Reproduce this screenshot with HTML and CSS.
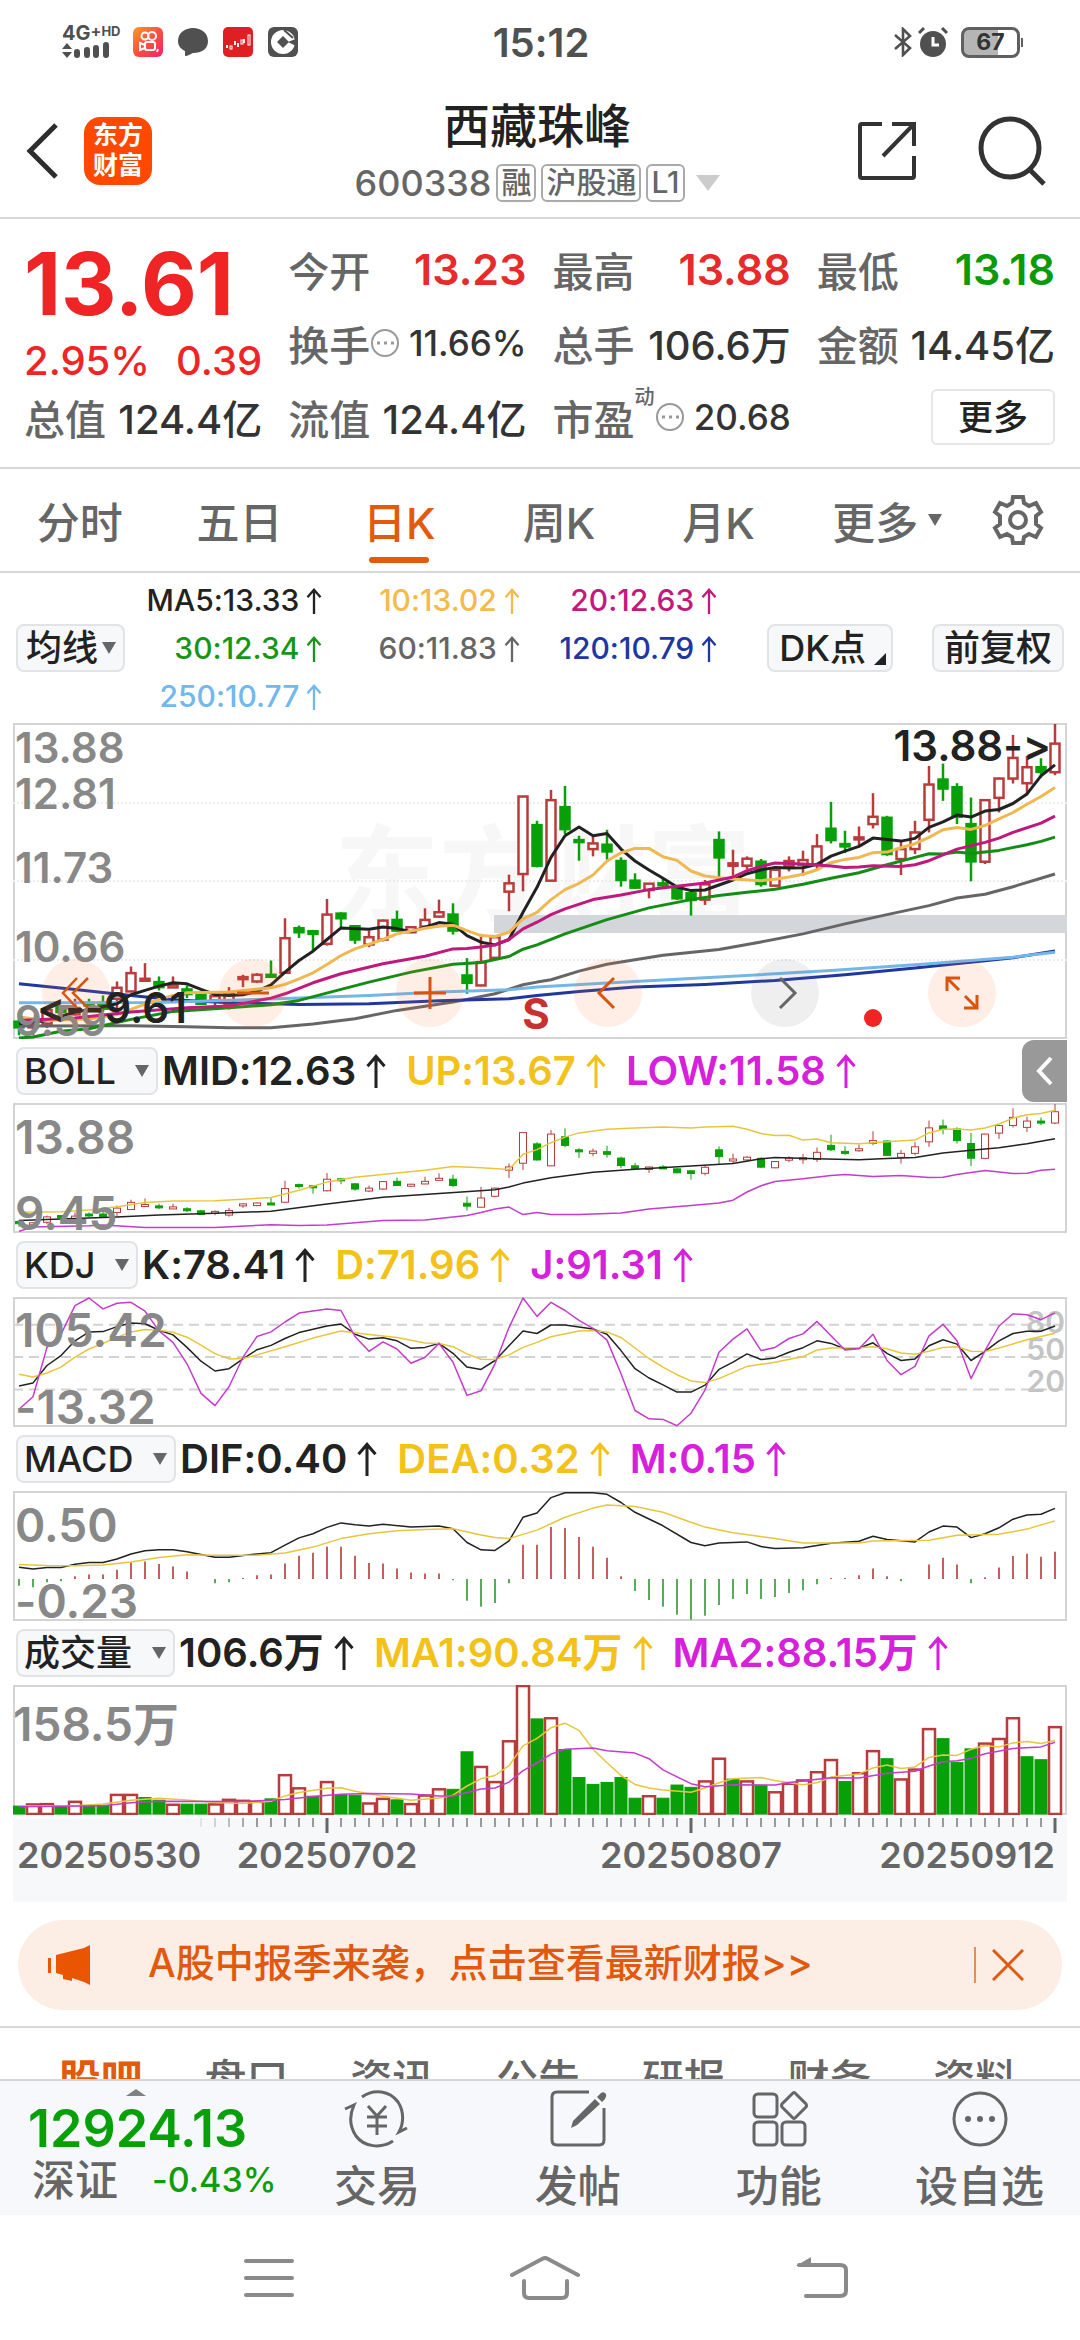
FILE: index.html
```
<!DOCTYPE html>
<html lang="zh-CN">
<head>
  <meta charset="UTF-8">
  <meta name="viewport" content="width=device-width, initial-scale=1.0">
  <title>西藏珠峰 600338</title>
  <link rel="stylesheet" href="styles.css">
</head>
<body>
  <svg class="defs" width="0" height="0">
    <symbol id="rise" viewBox="0 0 16 28"><path fill="none" stroke="currentColor" stroke-width="2.500" d="M8 28V2M1 10L8 2L15 10"/></symbol>
  </svg>

  <div class="status-bar">
    <div class="status-left">
      <div class="signal">
        <span>4G<sup>+</sup><small>HD</small></span>
        <svg width="48" height="17" viewBox="0 0 48 17"><path fill="#505050" d="M0 7L5 1L10 7ZM0 10L5 16L10 10Z"/><path stroke="#505050" stroke-width="6" stroke-linecap="round" d="M15 10V13M25 8V13M34 6V13M44 3V13"/></svg>
      </div>
      <svg width="30" height="30" viewBox="0 0 30 30"><defs><linearGradient id="ks" x1="0" y1="0" x2="1" y2="1"><stop offset="0" stop-color="#ff9a1f"/><stop offset="0.5" stop-color="#fb5040"/><stop offset="1" stop-color="#f5216b"/></linearGradient></defs><rect width="30" height="30" rx="6" fill="url(#ks)"/><g fill="none" stroke="#fff" stroke-width="2"><circle cx="12" cy="9" r="3.500"/><circle cx="19" cy="9" r="4"/><rect x="12" y="15" width="10" height="8" rx="2"/><path d="M12 18L7 16V23L12 21"/><path d="M25 22L24 25"/></g></svg>
      <svg width="30" height="30" viewBox="0 0 30 30"><path fill="#505050" d="M15 1C23 1 30 6 30 14C30 22 24 26 15 26C12 27 10 29 7 29L7 24C3 22 0 19 0 14C0 6 7 1 15 1Z"/></svg>
      <svg width="30" height="30" viewBox="0 0 30 30"><rect width="30" height="30" rx="5" fill="#e01f22"/><g stroke="#fff" fill="none"><path stroke-width="2" d="M4 18V21M12 14V18M15 16V20M21 12V16"/><rect x="7" y="19" width="2" height="3"/><rect x="18" y="13" width="2" height="4"/><rect x="25" y="8" width="2" height="10"/></g></svg>
      <svg width="30" height="30" viewBox="0 0 30 30"><rect width="30" height="30" rx="6" fill="#505050"/><circle cx="15" cy="15" r="12" fill="#fff"/><path fill="#505050" d="M15 9L21 15L15 21L9 15Z"/><path fill="#505050" d="M20 15L30 11V20Z"/><path stroke="#505050" stroke-width="2" d="M16 3L25 11"/></svg>
    </div>
    <div class="clock">15:12</div>
    <div class="status-right">
      <svg width="20" height="30" viewBox="0 0 20 30"><path fill="none" stroke="#505050" stroke-width="2.600" d="M2 8L17 21L10 28V2L17 9L2 22"/></svg>
      <svg width="30" height="30" viewBox="0 0 30 30"><circle cx="15" cy="17" r="13" fill="#505050"/><path fill="none" stroke="#505050" stroke-width="3" d="M1 6L6 1M24 1L29 6"/><path fill="none" stroke="#fff" stroke-width="3" d="M15 10V18H21"/></svg>
      <div class="battery"><span>67</span></div>
    </div>
  </div>

  <div class="header">
    <div class="header-side">
      <button class="icon-btn" aria-label="返回"><svg width="34" height="56" viewBox="0 0 34 56"><path fill="none" stroke="#2d2d2d" stroke-width="5" d="M30 2L4 28L30 54"/></svg></button>
      <div class="logo">东方<br>财富</div>
    </div>
    <div class="header-title">
      <h1>西藏珠峰</h1>
      <p><span class="code">600338</span><span class="tag">融</span><span class="tag">沪股通</span><span class="tag">L1</span><svg class="code-arrow" width="24" height="16" viewBox="0 0 24 16"><path fill="#ccc" d="M0 0H24L12 16Z"/></svg></p>
    </div>
    <div class="header-side header-right">
      <button class="icon-btn" aria-label="分享"><svg width="58" height="58" viewBox="0 0 58 58"><g fill="none" stroke="#333" stroke-width="4"><path d="M24 2H4Q2 2 2 4V54Q2 56 4 56H54Q56 56 56 54V34"/><path d="M34 2H56V24M56 2L25 34"/></g></svg></button>
      <button class="icon-btn" aria-label="搜索"><svg width="70" height="70" viewBox="0 0 70 70"><g fill="none" stroke="#333" stroke-width="5"><circle cx="32" cy="32" r="29"/><path d="M52 54L66 68"/></g></svg></button>
    </div>
  </div>

  <div class="quote">
    <div class="price-box">
      <div class="price">13.61</div>
      <div class="change"><span>2.95%</span><span>0.39</span></div>
    </div>
    <div class="stat"><span>今开</span><b class="up">13.23</b></div>
    <div class="stat"><span>最高</span><b class="up">13.88</b></div>
    <div class="stat"><span>最低</span><b class="down">13.18</b></div>
    <div class="stat"><span>换手</span><svg width="30" height="30" viewBox="0 0 30 30"><circle cx="15" cy="15" r="13" fill="none" stroke="#999" stroke-width="2"/><path stroke="#999" stroke-width="3" stroke-dasharray="3 4" d="M7 15H24"/></svg><b class="small">11.66%</b></div>
    <div class="stat"><span>总手</span><b>106.6万</b></div>
    <div class="stat"><span>金额</span><b>14.45亿</b></div>
    <div class="stat"><span>总值</span><b>124.4亿</b></div>
    <div class="stat"><span>流值</span><b>124.4亿</b></div>
    <div class="stat"><span>市盈<sup>动</sup></span><svg width="30" height="30" viewBox="0 0 30 30"><circle cx="15" cy="15" r="13" fill="none" stroke="#999" stroke-width="2"/><path stroke="#999" stroke-width="3" stroke-dasharray="3 4" d="M7 15H24"/></svg><b class="small">20.68</b></div>
    <div class="stat stat-more"><button>更多</button></div>
  </div>

  <div class="tabs">
    <button>分时</button>
    <button>五日</button>
    <button class="active">日K</button>
    <button>周K</button>
    <button>月K</button>
    <button>更多<svg width="14" height="12" viewBox="0 0 14 12"><path fill="#666" d="M0 0H14L7 12Z"/></svg></button>
    <button aria-label="设置"><svg width="52" height="52" viewBox="0 0 52 52"><g fill="none" stroke="#666" stroke-width="4"><circle cx="26" cy="26" r="8"/><path d="M21 3H31L32 9L37 12L44 9L49 18L44 22V30L49 34L44 43L37 40L32 43L31 49H21L20 43L15 40L8 43L3 34L8 30V22L3 18L8 9L15 12L20 9Z"/></g></svg></button>
  </div>

  <div class="ma-panel">
    <label class="picker"><select aria-label="主图指标"><option>均线</option></select></label>
    <div class="ma-values">
      <span class="c-black">MA5:13.33<svg class="rise"><use href="#rise"/></svg></span>
      <span class="c-amber">10:13.02<svg class="rise"><use href="#rise"/></svg></span>
      <span class="c-pink">20:12.63<svg class="rise"><use href="#rise"/></svg></span>
      <span class="c-green">30:12.34<svg class="rise"><use href="#rise"/></svg></span>
      <span class="c-gray">60:11.83<svg class="rise"><use href="#rise"/></svg></span>
      <span class="c-navy">120:10.79<svg class="rise"><use href="#rise"/></svg></span>
      <span class="c-sky">250:10.77<svg class="rise"><use href="#rise"/></svg></span>
    </div>
    <button class="chip dk">DK点<svg width="12" height="12" viewBox="0 0 12 12"><path fill="#222" d="M12 0V12H0Z"/></svg></button>
    <button class="chip">前复权</button>
  </div>

  <div class="charts">
    <div class="main-chart">
      <svg id="kline" viewBox="0 0 1054 316"></svg>
      <div class="chart-tools">
        <button aria-label="最左"><svg width="34" height="34" viewBox="0 0 34 34"><path fill="none" stroke="#d9550f" stroke-width="2.500" d="M18 2L4 17L18 32M29 2L14 17L29 32"/></svg></button>
        <button aria-label="缩小"><svg width="34" height="34" viewBox="0 0 34 34"><path stroke="#d9550f" stroke-width="3" d="M1 17H33"/></svg></button>
        <button aria-label="放大"><svg width="34" height="34" viewBox="0 0 34 34"><path stroke="#d9550f" stroke-width="3" d="M1 17H33M17 1V33"/></svg></button>
        <button aria-label="左移"><svg width="34" height="34" viewBox="0 0 34 34"><path fill="none" stroke="#d9550f" stroke-width="3" d="M23 2L8 17L23 32"/></svg></button>
        <button class="off" aria-label="右移"><svg width="34" height="34" viewBox="0 0 34 34"><path fill="none" stroke="#666" stroke-width="3" d="M12 2L27 17L12 32"/></svg></button>
        <button aria-label="全屏"><svg width="34" height="34" viewBox="0 0 34 34"><path fill="none" stroke="#d9550f" stroke-width="3" d="M15 2H2V15M2 2L14 14M19 32H32V19M32 32L20 20"/></svg></button>
      </div>
    </div>

    <div class="ind-row">
      <label class="picker"><select aria-label="指标一"><option>BOLL</option></select></label>
      <span class="c-black">MID:12.63<svg class="rise"><use href="#rise"/></svg></span>
      <span class="c-yellow">UP:13.67<svg class="rise"><use href="#rise"/></svg></span>
      <span class="c-magenta">LOW:11.58<svg class="rise"><use href="#rise"/></svg></span>
      <button class="handle" aria-label="展开"><svg width="18" height="30" viewBox="0 0 18 30"><path fill="none" stroke="#fff" stroke-width="4" d="M15 2L3 15L15 28"/></svg></button>
    </div>
    <svg id="boll" viewBox="0 0 1054 130"></svg>

    <div class="ind-row">
      <label class="picker"><select aria-label="指标二"><option>KDJ</option></select></label>
      <span class="c-black">K:78.41<svg class="rise"><use href="#rise"/></svg></span>
      <span class="c-yellow">D:71.96<svg class="rise"><use href="#rise"/></svg></span>
      <span class="c-magenta">J:91.31<svg class="rise"><use href="#rise"/></svg></span>
    </div>
    <svg id="kdj" viewBox="0 0 1054 130"></svg>

    <div class="ind-row">
      <label class="picker"><select aria-label="指标三"><option>MACD</option></select></label>
      <span class="c-black">DIF:0.40<svg class="rise"><use href="#rise"/></svg></span>
      <span class="c-yellow">DEA:0.32<svg class="rise"><use href="#rise"/></svg></span>
      <span class="c-magenta">M:0.15<svg class="rise"><use href="#rise"/></svg></span>
    </div>
    <svg id="macd" viewBox="0 0 1054 130"></svg>

    <div class="ind-row">
      <label class="picker"><select aria-label="指标四"><option>成交量</option></select></label>
      <span class="c-black">106.6万<svg class="rise"><use href="#rise"/></svg></span>
      <span class="c-yellow">MA1:90.84万<svg class="rise"><use href="#rise"/></svg></span>
      <span class="c-magenta">MA2:88.15万<svg class="rise"><use href="#rise"/></svg></span>
    </div>
    <svg id="vol" viewBox="0 0 1054 130"></svg>
    <svg id="axis" viewBox="0 0 1054 84"></svg>
  </div>

  <div class="banner">
    <svg width="46" height="40" viewBox="0 0 46 40"><path fill="#ea5504" d="M0 13H3V28H0ZM8 10L36 3L42 0V40L36 37L24 33V36L15 34V30L8 28Z"/></svg>
    <a href="#">A股中报季来袭，点击查看最新财报&gt;&gt;</a>
    <button aria-label="关闭"><svg width="32" height="32" viewBox="0 0 32 32"><path stroke="#e0590f" stroke-width="3" d="M1 1L31 31M31 1L1 31"/></svg></button>
  </div>

  <div class="sub-tabs">
    <a class="active" href="#">股吧</a>
    <a href="#">盘口</a>
    <a href="#">资讯</a>
    <a href="#">公告</a>
    <a href="#">研报</a>
    <a href="#">财务</a>
    <a href="#">资料</a>
  </div>

  <div class="bottom-bar">
    <div class="index-box">
      <svg width="20" height="7" viewBox="0 0 20 7"><path fill="#808080" d="M10 0L20 7H0Z"/></svg>
      <strong>12924.13</strong>
      <div><span>深证</span><em>-0.43%</em></div>
    </div>
    <button><svg width="66" height="58" viewBox="0 0 66 58"><g fill="none" stroke="#666" stroke-width="3"><path d="M18 7C30 -2 46 1 54 12C60 21 60 33 55 42L63 38"/><path d="M49 51C37 59 20 57 12 46C6 37 5 26 10 15L1 19"/><path d="M24 16L33 26L42 16M33 26V45M23 27H43M23 36H43"/></g></svg>交易</button>
    <button><svg width="58" height="58" viewBox="0 0 58 58"><path fill="none" stroke="#666" stroke-width="3" d="M40 2H8Q3 2 3 7V50Q3 55 8 55H50Q55 55 55 50V18"/><path fill="#666" d="M22 38L24 31L46 9L51 14L28 35ZM48 7L52 3Q55 1 57 4Q58 6 56 9L53 12Z"/></svg>发帖</button>
    <button><svg width="58" height="58" viewBox="0 0 58 58"><g fill="none" stroke="#666" stroke-width="3"><rect x="4" y="4" width="23" height="23" rx="4"/><rect x="4" y="32" width="23" height="23" rx="4"/><rect x="32" y="32" width="23" height="23" rx="4"/><path d="M43 3Q44 2 45 3L56 14Q57 16 56 17L45 28Q44 29 43 28L32 17Q31 16 32 14Z"/></g></svg>功能</button>
    <button><svg width="58" height="58" viewBox="0 0 58 58"><circle cx="29" cy="29" r="26" fill="none" stroke="#666" stroke-width="3"/><g fill="#666"><circle cx="17" cy="29" r="3"/><circle cx="29" cy="29" r="3"/><circle cx="41" cy="29" r="3"/></g></svg>设自选</button>
  </div>

  <div class="nav-bar">
    <button aria-label="菜单"><svg width="50" height="42" viewBox="0 0 50 42"><path stroke="#8a8a8a" stroke-width="4" stroke-linecap="round" d="M2 4H48M2 21H48M2 38H48"/></svg></button>
    <button aria-label="主页"><svg width="70" height="44" viewBox="0 0 70 44"><path fill="none" stroke="#8a8a8a" stroke-width="4" stroke-linecap="round" stroke-linejoin="round" d="M2 19L32 3Q35 1 38 3L68 19M14 25V37Q14 42 19 42H52Q57 42 57 37V25"/></svg></button>
    <button aria-label="后退"><svg width="52" height="42" viewBox="0 0 52 42"><path fill="#8a8a8a" d="M0 9L15 0V9Z"/><path fill="none" stroke="#8a8a8a" stroke-width="4" stroke-linecap="round" d="M3 8H44Q50 8 50 13V34Q50 39 44 39H10"/></svg></button>
  </div>

  <script src="chart.js"></script>
</body>
</html>
```
FILE: styles.css
```
* {
  box-sizing: border-box;
}

body {
  margin: 0;
  min-height: 100vh;
  display: flex;
  flex-direction: column;
  background: #fff;
  color: #222;
  font-family: Inter, "Noto Sans CJK SC", sans-serif;
  font-weight: 500;
  font-feature-settings: "calt" 0;
}

button {
  font: inherit;
  color: inherit;
  background: none;
  border: none;
  padding: 0;
  cursor: pointer;
}

a {
  color: inherit;
  text-decoration: none;
}

svg {
  display: block;
  flex: none;
}

.defs {
  position: absolute;
}

.rise {
  display: inline-block;
  width: 16px;
  height: 26px;
  margin-left: 7px;
  vertical-align: -3px;
}

/* status bar */
.status-bar {
  display: grid;
  grid-template-columns: 1fr auto 1fr;
  align-items: center;
  height: 84px;
  padding: 0 60px 0 62px;
  color: #505050;
}

.status-left,
.status-right {
  display: flex;
  align-items: center;
  gap: 15px;
}

.status-right {
  justify-content: flex-end;
  gap: 5px;
}

.signal {
  width: 56px;
}

.signal span {
  display: flex;
  font-size: 20px;
  font-weight: 700;
  line-height: 17px;
}

.signal sup {
  font-size: 16px;
  line-height: 12px;
}

.signal small {
  font-size: 13px;
  line-height: 13px;
}

.clock {
  font-size: 40px;
  font-weight: 600;
}

.battery {
  width: 59px;
  height: 31px;
  margin-left: 8px;
  border: 3px solid #606060;
  border-radius: 8px;
  background: linear-gradient(to right, #b5b5b5 65%, #fff 65%);
  color: #333;
  font-size: 23px;
  font-weight: 700;
  line-height: 25px;
  text-align: center;
  position: relative;
}

.battery::after {
  content: "";
  position: absolute;
  right: -6px;
  top: 8px;
  width: 2px;
  height: 9px;
  background: #606060;
}

/* header */
.header {
  display: grid;
  grid-template-columns: 1fr auto 1fr;
  align-items: center;
  height: 135px;
  padding: 0 32px 0 26px;
  border-bottom: 2px solid #d8d8d8;
}

.header-side {
  display: flex;
  align-items: center;
  gap: 24px;
}

.header-right {
  justify-content: flex-end;
  gap: 62px;
}

.logo {
  width: 68px;
  height: 68px;
  border-radius: 16px;
  background: #ff4800;
  color: #fff;
  font-size: 25px;
  font-weight: 700;
  line-height: 30px;
  padding-top: 3px;
  text-align: center;
}

.header-title {
  padding-top: 5px;
  text-align: center;
}

.header-title h1 {
  margin: 0;
  font-size: 47px;
  font-weight: 500;
  line-height: 60px;
}

.header-title p {
  margin: 0;
  display: flex;
  align-items: center;
  justify-content: center;
  gap: 5px;
  height: 54px;
}

.code {
  color: #666;
  font-size: 36px;
}

.tag {
  height: 38px;
  padding: 0 3px;
  border: 2px solid #aaa;
  border-radius: 6px;
  color: #666;
  font-size: 30px;
  line-height: 32px;
}

.code-arrow {
  margin-left: 6px;
}

/* quote */
.quote {
  display: grid;
  grid-template-columns: repeat(4, 1fr);
  grid-auto-rows: 74px;
  column-gap: 26px;
  padding: 13px 25px 13px 24px;
  border-bottom: 2px solid #d8d8d8;
}

.price-box {
  grid-row: span 2;
  color: #f02424;
}

.price {
  font-size: 86px;
  font-weight: 700;
  line-height: 104px;
}

.change {
  display: flex;
  justify-content: space-between;
  font-size: 40px;
  line-height: 50px;
}

.stat {
  display: flex;
  align-items: center;
  justify-content: space-between;
  white-space: nowrap;
}

.stat span {
  display: flex;
  color: #666;
  font-size: 41px;
}

.stat sup {
  font-size: 20px;
  line-height: 20px;
}

.stat svg {
  margin-right: auto;
}

.stat b {
  color: #333;
  font-size: 40px;
  font-weight: 500;
}

.stat b.small {
  font-size: 35px;
}

.stat b.up {
  color: #e82a2a;
  font-size: 43px;
  font-weight: 600;
}

.stat b.down {
  color: #0a9a0a;
  font-size: 43px;
  font-weight: 600;
}

.stat-more {
  justify-content: flex-end;
}

.stat-more button {
  width: 124px;
  height: 56px;
  border: 2px solid #e6e6e6;
  border-radius: 6px;
  font-size: 35px;
  line-height: 46px;
}

/* period tabs */
.tabs {
  display: grid;
  grid-template-columns: repeat(5, 160fr) 178fr 84fr;
  height: 104px;
  padding-right: 20px;
  border-bottom: 2px solid #d8d8d8;
  color: #666;
  font-size: 43px;
}

.tabs button {
  display: flex;
  align-items: center;
  justify-content: center;
  gap: 10px;
}

.tabs .active {
  color: #e25a0c;
  position: relative;
}

.tabs .active::after {
  content: "";
  position: absolute;
  bottom: 8px;
  width: 60px;
  height: 6px;
  border-radius: 3px;
  background: #e25a0c;
}

/* moving averages */
.ma-panel {
  display: flex;
  align-items: center;
  height: 150px;
  padding: 0 16px;
}

.picker {
  position: relative;
  display: inline-flex;
}

.picker select {
  appearance: none;
  height: 48px;
  margin: 0;
  padding: 0 40px 0 6px;
  border: 2px solid #e2e3e6;
  border-radius: 8px;
  background: #f7f8fa;
  color: #222;
  font: 500 36px/40px Inter, "Noto Sans CJK SC", sans-serif;
}

.picker::after {
  content: "";
  position: absolute;
  right: 9px;
  top: 18px;
  border: 7px solid transparent;
  border-top: 12px solid #666;
  border-bottom: none;
}

.ma-panel .picker select {
  padding: 0 24px 0 8px;
}

.ma-values {
  flex: 1;
  display: grid;
  grid-template-columns: repeat(3, 1fr);
  grid-auto-rows: 48px;
  align-items: center;
  text-align: right;
  font-size: 30px;
  white-space: nowrap;
}

.chip {
  height: 48px;
  margin-left: 39px;
  padding: 0 10px;
  border: 2px solid #e2e3e6;
  border-radius: 8px;
  background: #f7f8fa;
  font-size: 36px;
  line-height: 40px;
  display: flex;
  align-items: center;
  white-space: nowrap;
}

.dk {
  margin-left: 50px;
  padding-right: 5px;
  gap: 8px;
}

.dk svg {
  align-self: flex-end;
  margin-bottom: 5px;
}

.c-black { color: #222; }
.c-amber { color: #f5ba4a; }
.c-pink { color: #c4187c; }
.c-green { color: #169616; }
.c-gray { color: #666; }
.c-navy { color: #2036a0; }
.c-sky { color: #70b8ee; }
.c-yellow { color: #f2c21a; }
.c-magenta { color: #d620dc; }

/* charts */
.charts {
  padding: 0 13px;
}

.charts > svg,
.main-chart > svg {
  width: 100%;
  height: auto;
}

.main-chart {
  position: relative;
}

.chart-tools {
  position: absolute;
  left: 29px;
  right: 71px;
  bottom: 12px;
  display: flex;
  justify-content: space-between;
}

.chart-tools button {
  width: 68px;
  height: 68px;
  border-radius: 50%;
  background: rgba(255, 115, 50, 0.12);
  display: flex;
  align-items: center;
  justify-content: center;
}

.chart-tools .off {
  background: rgba(120, 120, 120, 0.12);
}

.ind-row {
  display: flex;
  align-items: center;
  height: 64px;
  padding-left: 3px;
  font-size: 40px;
  font-weight: 600;
  line-height: 56px;
  white-space: nowrap;
}

.ind-row .picker {
  margin-right: 4px;
}

.ind-row span {
  margin-right: 20px;
}

.ind-row .rise {
  width: 20px;
  height: 34px;
  margin-left: 10px;
}

.handle {
  width: 45px;
  height: 62px;
  margin-left: auto;
  border-radius: 12px 0 0 12px;
  background: #999;
  display: flex;
  align-items: center;
  justify-content: center;
}

#axis {
  margin-top: 3px;
  background: #f7f8fa;
}

/* chart drawing */
.frame { fill: none; stroke: #d4d4d4; stroke-width: 2; }
.grid { stroke: #ececec; stroke-width: 2; stroke-dasharray: 2 2; }
.dash { stroke: #d2d2d2; stroke-width: 2; stroke-dasharray: 10 6; }
.line { fill: none; stroke-width: 1.5; stroke-linejoin: round; }
#kline .line { stroke-width: 3; }
.red { fill: #fff; stroke: #b83c3c; }
.green { fill: #08a008; stroke: #08a008; }
#kline .red, #kline .green, #vol .red { stroke-width: 2.5; }
.zone { fill: #d3d6da; }
.watermark { fill: #f7f7f7; font-size: 104px; font-weight: 700; }
.scale { fill: #888; font-size: 42px; font-weight: 600; }
.scale-lg { fill: #888; font-size: 46px; font-weight: 600; }
.scale-sm { fill: #c4c4c4; font-size: 30px; font-weight: 600; }
.mark { fill: #222; font-size: 42px; font-weight: 600; }
.sell { fill: #c93030; font-size: 42px; font-weight: 700; }
.dot { fill: #f02424; }
.tick { stroke: #999; stroke-width: 2; }
.tick-lg { stroke: #666; stroke-width: 3; }
.date { fill: #666; font-size: 36px; font-weight: 600; }

/* banner */
.banner {
  display: flex;
  align-items: center;
  height: 90px;
  margin: 18px 18px 16px;
  padding: 0 38px 0 30px;
  border-radius: 45px;
  background: #fceee5;
  color: #e0590f;
}

.banner a {
  flex: 1;
  margin-left: 54px;
  font-size: 39px;
  line-height: 50px;
  padding-bottom: 4px;
}

.banner button {
  height: 36px;
  padding-left: 16px;
  border-left: 2px solid #e0905f;
}

/* info tabs, cut off by the bottom bar */
.sub-tabs {
  display: grid;
  grid-template-columns: repeat(7, 1fr);
  height: 53px;
  padding: 28px 32px 0 28px;
  border-top: 2px solid #d8d8d8;
  overflow: hidden;
  color: #666;
  font-size: 42px;
  line-height: 48px;
  text-align: center;
}

.sub-tabs .active {
  color: #e25a0c;
  font-weight: 700;
}

.bottom-bar {
  display: grid;
  grid-template-columns: 136fr repeat(4, 100fr);
  height: 136px;
  border-top: 2px solid #d4d5d7;
  background: #f7f8fb;
  color: #666;
}

.bottom-bar button {
  display: flex;
  flex-direction: column;
  align-items: center;
  padding-top: 9px;
  font-size: 43px;
  line-height: 60px;
  gap: 8px;
}

.index-box {
  padding: 8px 0 0 28px;
}

.index-box svg {
  margin-left: 98px;
}

.index-box strong {
  display: block;
  color: #08a008;
  font-size: 52px;
  font-weight: 600;
  line-height: 66px;
}

.index-box div {
  display: flex;
  align-items: center;
  gap: 34px;
  line-height: 36px;
  white-space: nowrap;
}

.index-box span {
  margin-left: 4px;
  font-size: 43px;
}

.index-box em {
  color: #0f9c0f;
  font-size: 34px;
  font-style: normal;
}

.nav-bar {
  flex: 1;
  display: flex;
  align-items: center;
  justify-content: center;
  gap: 216px;
  min-height: 126px;
  padding-left: 12px;
}
```
FILE: chart.js
```
// candles: colour, body top, body bottom, high, low (distance from the top of the price scale)
const candles = `g 919 936 907 960|r 929 936 925 960|r 884 925 874 938|g 874 890 870 895|r 878 897 850 900|g 862 870 850 885
g 862 880 840 890|r 817 850 798 880|r 773 828 753 830|r 790 796 743 796|g 800 815 783 825|r 808 816 783 816|g 822 836 810 848
g 838 865 830 868|r 842 855 835 872|r 835 870 815 882|r 785 790 778 815|r 778 798 773 803|g 778 783 735 785|r 668 772 608 775
g 638 650 630 667|g 647 655 643 707|r 597 685 550 690|g 594 608 590 635|g 632 672 630 685|r 665 687 645 695|r 615 672 612 678
g 613 645 585 648|r 635 650 632 653|r 613 633 578 635|r 590 603 552 606|g 597 645 563 657|g 780 802 728 835|r 740 810 655 812
r 665 727 660 730|r 503 528 477 587|r 242 475 240 527|g 328 450 315 455|r 253 495 222 497|g 274 340 210 355|g 373 378 360 435
r 383 400 363 422|g 387 407 342 432|g 436 493 425 513|g 495 516 473 520|r 504 523 502 548|g 503 507 490 515|g 518 548 515 553
g 533 553 530 600|r 506 552 493 568|g 373 425 347 483|r 443 450 402 480|r 429 450 422 460|g 438 505 430 513|r 462 510 458 513
r 436 452 422 467|r 433 447 405 480|r 392 447 355 465|g 339 373 258 383|g 385 392 345 412|r 365 370 332 388|r 303 325 232 338
g 306 415 300 420|r 400 430 375 478|r 350 400 315 415|r 206 312 150 350|g 191 218 143 255|g 214 303 202 325|g 325 437 245 497
r 253 438 250 445|r 188 246 185 290|r 126 188 57 203|r 154 202 120 238|g 154 168 127 185|r 83 169 24 178`
  .split(/[|\n]/).map(s => s.split(' ')).map(([c, ...v]) => [c, ...v.map(Number)]);

const volumes = 'g1128 r1123 r1122 g1130 r1115 g1126 g1126 r1094 r1094 g1102 g1110 r1124 g1122 g1122 r1123 r1109 r1112 r1115 g1106 r1034 r1074 g1098 r1055 g1093 g1095 r1120 r1106 g1109 r1122 r1096 r1077 g1077 g963 r1009 r1055 r931 r763 g863 r861 g956 g1041 g1062 g1056 g1041 g1104 r1098 g1104 g1064 g1071 r1053 r984 g1046 r1053 g1065 r1086 r1060 r1050 r1025 r988 g1053 r1028 r961 g984 r1047 r1017 r894 g923 g995 g954 r938 r924 r861 g978 g987 r888'.split(' ');

const macd = [467,471,456,453,438,432,432,418,396,393,400,408,423,446,459,456,443,435,432,399,375,366,348,348,375,397,399,414,426,429,429,450,512,531,519,459,342,342,288,291,318,348,381,438,483,510,531,555,570,558,525,507,492,507,501,489,480,462,443,443,435,414,438,453,446,402,381,402,459,441,411,376,369,378,363];

// every line is a list of "day,value"
const lines = {
  kline: [
    ['#666', '0,932 8,931 12,934 15,937 18,937 21,926 24,910 27,885 31,860 34,835 36,808 37,800 38,793 40,767 42,746 46,719 50,702 53,679 56,655 59,625 62,597 65,570 67,547 69,536 71,513 73,488 74,475'],
    ['#2036a0', '0,805 4,822 8,840 11,853 15,862 20,867 25,865 30,856 35,850 37,840 40,828 44,815 49,807 54,795 59,778 64,758 69,736 71,727 74,706'],
    ['#74b6e8', '0,862 10,861 20,848 25,840 30,830 35,823 37,815 42,803 50,785 58,765 65,745 71,725 74,710'],
    ['#158c15', '0,968 1,965 3,948 5,940 8,912 11,888 15,877 18,868 20,855 23,822 25,800 28,770 31,746 33,741 35,723 36,701 37,688 39,655 42,612 45,577 48,552 50,540 52,530 54,521 56,506 58,488 60,471 62,447 64,425 65,414 66,415 67,409 68,413 70,404 72,387 73,377 74,364'],
    ['#222', '0,925 2,915 4,890 6,874 7,865 8,838 9,825 10,812 11,802 12,805 13,822 14,837 15,840 16,838 17,828 18,808 19,770 20,735 21,707 22,672 23,637 25,641 26,634 27,639 28,648 29,635 30,621 31,626 32,660 33,680 34,688 35,672 36,590 37,515 38,425 39,360 40,334 41,360 42,353 43,400 44,436 45,463 46,488 47,514 48,525 49,523 50,508 51,493 52,474 53,463 54,455 55,457 56,456 57,446 58,421 59,406 60,392 61,367 62,371 63,376 64,368 65,335 66,318 67,298 68,304 69,286 70,281 71,263 72,234 73,180 74,147'],
    ['#f0b850', '0,905 2,915 5,910 7,898 8,882 9,866 10,852 11,840 12,832 15,830 18,817 19,807 20,790 21,772 22,747 23,720 24,700 26,672 27,655 29,638 30,632 31,629 32,645 33,660 34,663 35,650 36,610 37,590 38,552 39,522 40,503 41,478 42,436 43,411 44,398 45,398 46,423 47,434 48,466 49,481 50,486 51,490 53,495 54,491 55,484 56,476 57,462 58,441 59,431 60,425 61,411 62,409 63,396 64,384 65,365 66,342 67,335 68,341 69,329 70,309 71,290 72,265 73,242 74,215'],
    ['#c0187c', '0,915 4,908 8,890 12,877 15,872 18,848 19,835 21,802 23,775 26,745 29,722 31,700 32,699 33,694 34,688 35,672 36,640 37,620 38,597 39,580 41,552 43,538 45,522 47,512 49,502 50,493 51,484 52,465 53,452 54,442 56,445 58,451 59,455 60,454 61,450 63,452 64,447 65,435 67,400 69,380 70,367 71,350 73,322 74,301']
  ],
  boll: [
    ['#222', '0,542 3,537 7,531 10,525 14,520 18,514 22,492 26,471 30,460 34,448 35,440 36,428 38,412 41,395 44,386 48,376 51,368 53,354 54,350 57,354 60,357 62,353 64,350 66,336 68,328 70,320 72,308 74,293'],
    ['#e8c63c', '0,517 3,515 5,510 7,500 9,487 11,483 14,482 18,472 20,450 22,425 24,410 27,397 29,389 31,377 33,381 35,387 36,340 37,326 38,305 39,288 40,275 42,264 44,260 46,257 48,260 49,257 51,255 52,264 53,277 54,283 55,282 56,297 57,294 58,305 60,308 62,302 64,297 65,275 66,264 67,263 68,266 69,260 70,248 71,230 72,220 73,216 74,206'],
    ['#c43ccc', '0,575 1,562 5,558 6,556 9,563 14,563 18,555 20,557 22,556 26,542 29,540 32,527 33,518 34,507 35,501 36,524 37,518 38,524 40,524 43,519 45,507 48,496 50,489 51,480 52,455 53,436 54,423 56,415 58,405 59,402 61,408 63,405 65,411 66,410 67,402 69,390 71,399 72,398 73,389 74,386']
  ],
  kdj: [
    ['#222', '0,1037 1,1028 2,975 3,945 4,900 5,873 6,872 7,857 8,846 9,848 10,868 11,882 12,920 13,962 14,992 15,985 16,955 17,927 18,914 19,893 20,875 22,855 23,849 24,880 25,895 26,891 27,900 28,923 29,920 30,908 31,938 32,980 33,987 34,960 35,915 36,870 37,878 38,852 39,852 41,864 42,880 43,930 44,985 45,1013 46,1034 47,1056 48,1056 49,1035 50,987 51,965 52,940 53,957 54,952 55,935 56,921 57,900 58,908 59,925 60,923 61,906 62,938 63,960 64,955 65,915 66,897 67,910 68,960 69,932 70,900 71,878 72,871 73,871 74,855'],
    ['#e8c63c', '0,1002 1,1010 2,998 3,980 4,950 5,925 6,908 7,890 8,873 9,866 10,868 11,874 12,889 13,913 14,939 15,955 16,954 17,943 19,918 21,892 23,870 25,881 27,890 29,907 30,908 31,918 32,940 33,956 34,957 35,943 36,920 37,905 38,888 40,870 41,869 42,873 43,890 45,954 46,980 47,1003 48,1022 49,1027 50,1015 52,978 54,965 56,948 57,928 58,922 60,921 61,918 62,924 63,937 64,941 65,932 66,920 67,918 68,932 69,933 70,922 72,897 74,877'],
    ['#c43ccc', '0,1108 1,1070 2,920 3,880 4,793 5,770 6,803 7,786 8,783 9,810 10,870 11,905 12,970 13,1060 14,1097 15,1040 16,950 17,887 18,873 19,843 20,816 22,803 23,808 24,887 25,932 26,903 27,925 28,968 29,950 30,908 31,965 32,1066 33,1052 34,970 35,860 36,770 37,826 38,783 39,808 40,838 41,862 42,898 43,1000 44,1112 45,1137 46,1139 47,1158 48,1120 49,1050 50,935 51,895 52,864 53,930 54,920 55,893 56,879 57,841 58,885 59,928 60,924 61,880 62,960 63,1003 64,978 65,885 66,850 67,900 68,1015 69,930 70,855 71,818 72,821 73,836 74,815']
  ],
  macd: [
    ['#222', '0,410 1,416 2,411 3,411 4,401 5,396 6,396 7,385 8,370 9,360 10,357 11,357 12,363 14,380 15,380 17,370 18,366 19,343 20,321 21,308 22,289 23,275 24,281 25,285 26,279 28,288 30,285 31,293 32,335 33,357 34,359 35,330 36,258 37,245 38,198 39,183 41,183 42,188 43,213 44,243 46,284 48,335 49,345 50,336 52,333 53,347 54,353 56,351 58,337 60,331 61,316 62,326 64,333 65,303 66,285 67,288 68,320 69,308 70,290 71,264 72,251 73,249 74,231'],
    ['#e8c63c', '0,402 2,405 4,406 6,403 8,394 10,381 12,372 14,374 17,374 19,367 21,349 23,323 25,308 27,299 29,295 31,293 33,312 34,320 35,323 37,297 39,258 41,230 42,221 44,225 46,243 48,273 49,288 51,305 54,323 56,336 60,336 61,330 65,328 67,313 70,310 72,294 74,269']
  ],
  vol: [
    ['#e8c63c', '0,1128 4,1127 6,1122 8,1110 10,1104 12,1109 14,1117 16,1120 18,1113 19,1097 20,1087 22,1074 23,1072 24,1083 26,1098 28,1110 30,1103 31,1095 32,1067 33,1045 34,1035 35,1005 36,945 37,922 38,890 39,876 40,898 41,955 42,996 43,1035 44,1062 45,1073 46,1079 48,1086 49,1073 50,1057 51,1045 53,1041 54,1050 56,1063 57,1057 58,1040 60,1030 61,1012 62,1003 63,1014 64,1009 65,980 66,973 67,974 68,955 69,944 70,948 71,936 72,932 73,938 74,929'],
    ['#c43ccc', '0,1130 6,1127 8,1118 10,1113 16,1114 19,1108 21,1099 23,1092 25,1090 28,1091 30,1097 31,1097 32,1087 33,1076 34,1073 35,1055 36,1020 37,997 38,970 39,955 41,951 42,960 44,967 45,984 46,1018 48,1060 49,1069 51,1063 54,1064 55,1056 58,1042 60,1043 62,1028 64,1022 65,1006 66,993 67,990 68,983 69,969 71,953 73,948 74,934']
  ]
};

const STEP = 14;
const x = i => 6 + i * STEP;
const scale = (top, bottom, height) => v => (v - top) / (bottom - top) * (height - 2) + 1;

function text(cls, tx, ty, value, anchor = 'start') {
  return `<text class="${cls}" x="${tx}" y="${ty}" text-anchor="${anchor}">${value}</text>`;
}

function hline(cls, y) {
  return `<line class="${cls}" x1="0" x2="1054" y1="${y}" y2="${y}"/>`;
}

function frame(h) {
  return `<rect class="frame" x="1" y="1" width="1052" height="${h - 2}"/>`;
}

function drawLines(id, y) {
  return lines[id].map(([color, pts]) => {
    const points = pts.split(' ').map(p => p.split(',')).map(([i, v]) => x(+i) + ',' + y(+v).toFixed(1)).join(' ');
    return `<polyline class="line" stroke="${color}" points="${points}"/>`;
  }).join('');
}

function drawCandles(y, w) {
  return candles.map(([c, top, bottom, high, low], i) => {
    const cls = c === 'r' ? 'red' : 'green';
    const h = Math.max(y(bottom) - y(top), 2);
    return `<path class="${cls}" d="M${x(i)} ${y(high)}V${y(low)}"/>` +
      `<rect class="${cls}" x="${x(i) - w / 2}" y="${y(top)}" width="${w}" height="${h}"/>`;
  }).join('');
}

function draw(id, html) {
  document.getElementById(id).innerHTML = html;
}

// main price chart
const price = scale(24, 968, 316);
draw('kline',
  text('watermark', 322, 190, '东方财富') +
  frame(316) + hline('grid', 80) + hline('grid', 158) + hline('grid', 237) +
  '<rect class="zone" x="481" y="192" width="573" height="18"/>' +
  drawCandles(price, 9) + drawLines('kline', price) +
  text('scale', 2, 40, '13.88') + text('scale', 2, 86, '12.81') + text('scale', 2, 160, '11.73') +
  text('scale', 2, 239, '10.66') + text('scale', 2, 313, '9.59') +
  text('mark', 24, 300, '&lt;--9.61') + text('mark', 1038, 38, '13.88-&gt;', 'end') +
  text('sell', 523, 306, 'S', 'middle') + '<circle class="dot" cx="860" cy="295" r="9"/>');

// BOLL shares the candles, on a scale that reaches down to 9.45
const boll = scale(187, 577, 130);
draw('boll', frame(130) + drawCandles(v => boll(187 + (v - 24) / 2.5), 7) + drawLines('boll', boll) +
  text('scale-lg', 2, 51, '13.88') + text('scale-lg', 2, 127, '9.45'));

const kdj = scale(770, 1159, 130);
draw('kdj', frame(130) + [851, 949, 1048].map(v => hline('dash', kdj(v))).join('') +
  text('scale-sm', 1052, 36, '80', 'end') + text('scale-sm', 1052, 63, '50', 'end') + text('scale-sm', 1052, 95, '20', 'end') +
  drawLines('kdj', kdj) +
  text('scale-lg', 2, 50, '105.42') + text('scale-lg', 2, 127, '-13.32'));

const dif = scale(181, 571, 130);
draw('macd', frame(130) + macd.map((v, i) => {
  const color = v < 446 ? '#c46060' : '#58ac58';
  return `<path stroke="${color}" stroke-width="2" d="M${x(i)} ${dif(446)}V${dif(v)}"/>`;
}).join('') + drawLines('macd', dif) +
  text('scale-lg', 2, 51, '0.50') + text('scale-lg', 2, 127, '-0.23'));

const vol = scale(763, 1152, 130);
draw('vol', frame(130) + volumes.map((s, i) => {
  const top = vol(+s.slice(1));
  const cls = s[0] === 'r' ? 'red' : 'green';
  return `<rect class="${cls}" x="${x(i) - 6}" y="${top}" width="12" height="${129 - top}"/>`;
}).join('') + drawLines('vol', vol) + text('scale-lg', 0, 56, '158.5万'));

// time axis, fading in from the left
let ticks = '';
for (let i = 13; i < 75; i++) {
  const big = i === 22 || i === 48 || i === 74;
  ticks += `<path class="${big ? 'tick-lg' : 'tick'}" opacity="${Math.min(1, (i - 12) / 5)}" d="M${x(i)} 0V${big ? 15 : 9}"/>`;
}
draw('axis', ticks + text('date', 4, 50, '20250530') + text('date', 314, 50, '20250702', 'middle') +
  text('date', 678, 50, '20250807', 'middle') + text('date', 1042, 50, '20250912', 'end'));
```
